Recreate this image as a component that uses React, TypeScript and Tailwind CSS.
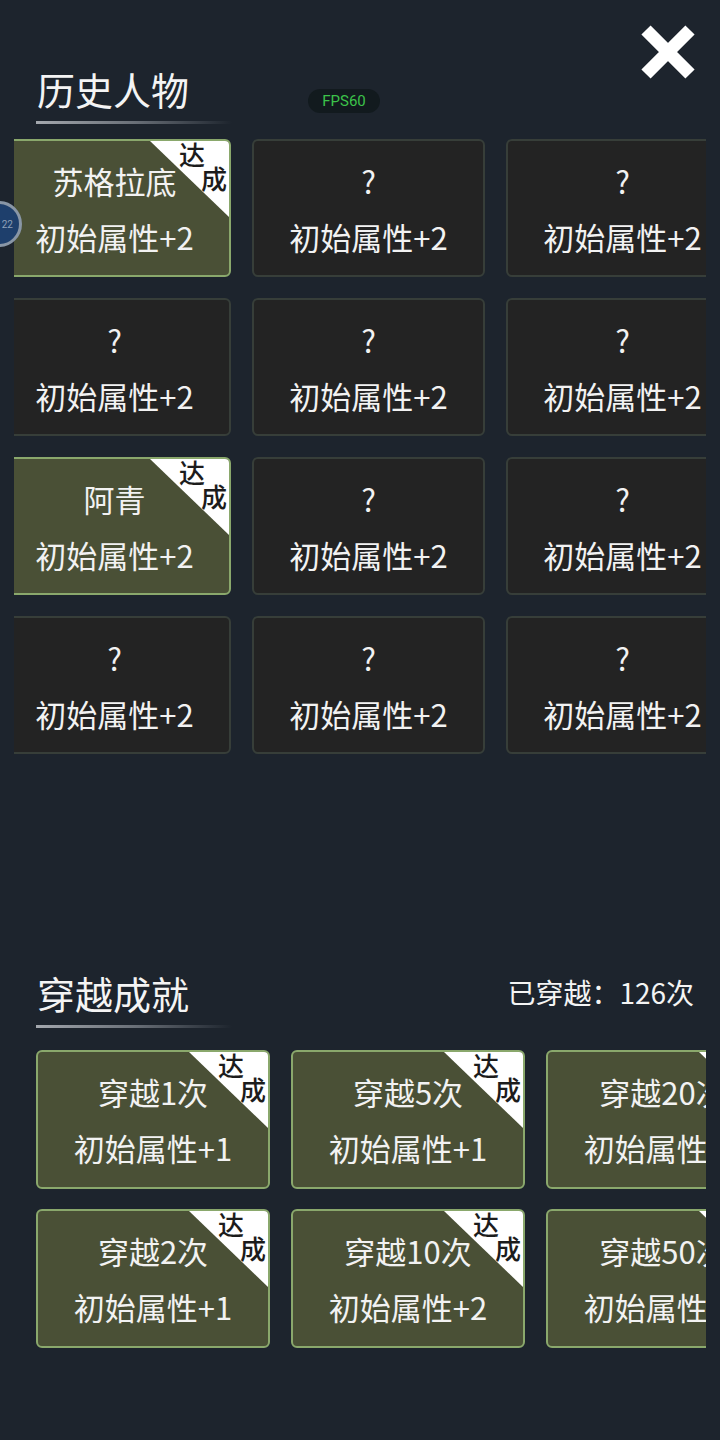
const figures = [
  { name: '苏格拉底', done: true },
  { name: '?', done: false },
  { name: '?', done: false },
  { name: '?', done: false },
  { name: '?', done: false },
  { name: '?', done: false },
  { name: '阿青', done: true },
  { name: '?', done: false },
  { name: '?', done: false },
  { name: '?', done: false },
  { name: '?', done: false },
  { name: '?', done: false },
];

const travels = [
  { name: '穿越1次', bonus: '初始属性+1', done: true },
  { name: '穿越5次', bonus: '初始属性+1', done: true },
  { name: '穿越20次', bonus: '初始属性+1', done: true },
  { name: '穿越2次', bonus: '初始属性+1', done: true },
  { name: '穿越10次', bonus: '初始属性+2', done: true },
  { name: '穿越50次', bonus: '初始属性+2', done: true },
];

// white corner ribbon with "达成" laid over it
const Ribbon = () => (
  <>
    <div className="absolute top-0 right-0 w-[79px] h-[76px] rounded-tr-[4px] bg-white [clip-path:polygon(0_0,100%_0,100%_100%)]" />
    <span className="absolute right-[24px] top-[-2px] text-[26px] leading-[30px] font-medium text-[#1c1c1c]">达</span>
    <span className="absolute right-[2px] top-[22px] text-[26px] leading-[30px] font-medium text-[#1c1c1c]">成</span>
  </>
);

const Card = ({ name, bonus, done, size }: { name: string; bonus: string; done: boolean; size: string }) => (
  <div
    className={`relative shrink-0 ${size} rounded-[6px] border-2 ${
      done ? 'bg-[#4a5036] border-[#8aa86c]' : 'bg-[#232323] border-[#373e39]'
    }`}
  >
    {done && <Ribbon />}
    <div className="relative flex flex-col items-center pt-[12px] text-[#f2f2f2] text-[31px] whitespace-nowrap">
      <div className="h-[56px] leading-[56px]">{name}</div>
      <div className="h-[56px] leading-[56px]">{bonus}</div>
    </div>
  </div>
);

const SectionTitle = ({ text }: { text: string }) => (
  <div>
    <div className="pl-[37px] text-[38px] leading-[48px] text-[#f4f4f4]">{text}</div>
    <div className="ml-[36px] mt-[8px] w-[196px] h-[3px] bg-gradient-to-r from-[#a4a8ae] via-[#6a7078] to-transparent" />
  </div>
);

export default function App() {
  return (
    <div
      className="relative w-[720px] h-[1440px] overflow-hidden bg-[#1d242d]"
      style={{ fontFamily: '"Noto Sans CJK SC", "Noto Sans", sans-serif' }}
    >
      <div className="pt-[65px]">
        <SectionTitle text="历史人物" />
      </div>

      <div className="absolute left-[308px] top-[89px] w-[72px] h-[24px] rounded-full bg-[#121a1e] flex items-center justify-center text-[15px] text-[#3cc24a] font-['Roboto',sans-serif]">
        FPS60
      </div>

      <svg className="absolute left-[638px] top-[22px]" width="60" height="60" viewBox="0 0 60 60">
        <path d="M8 8 L52 52 M52 8 L8 52" stroke="#ffffff" strokeWidth="13" strokeLinecap="butt" />
      </svg>

      <div className="ml-[14px] mt-[15px] w-[692px] overflow-hidden">
        <div className="ml-[-16px] grid grid-cols-[233px_233px_233px] gap-x-[21px] gap-y-[21px] w-[800px]">
          {figures.map((f, i) => (
            <Card key={i} name={f.name} bonus="初始属性+2" done={f.done} size="w-[233px] h-[138px]" />
          ))}
        </div>
      </div>

      <div className="absolute left-[-24px] top-[201px] w-[46px] h-[46px] rounded-full bg-[#1e3f6c] border-[3px] border-[#8996a6] flex items-center justify-end pr-[6px]">
        <span className="text-[10px] text-[#8ea0b8] font-['Roboto',sans-serif]">22</span>
      </div>

      <div className="mt-[215px] flex items-end justify-between pr-[26px]">
        <SectionTitle text="穿越成就" />
        <div className="pb-[16px] text-[28px] leading-[40px] text-[#f4f4f4]">已穿越：126次</div>
      </div>

      <div className="ml-[36px] mt-[22px] w-[670px] overflow-hidden">
        <div className="grid grid-cols-[234px_234px_234px] gap-x-[21px] gap-y-[20px] w-[760px]">
          {travels.map((t, i) => (
            <Card key={i} name={t.name} bonus={t.bonus} done={t.done} size="w-[234px] h-[139px]" />
          ))}
        </div>
      </div>
    </div>
  );
}
